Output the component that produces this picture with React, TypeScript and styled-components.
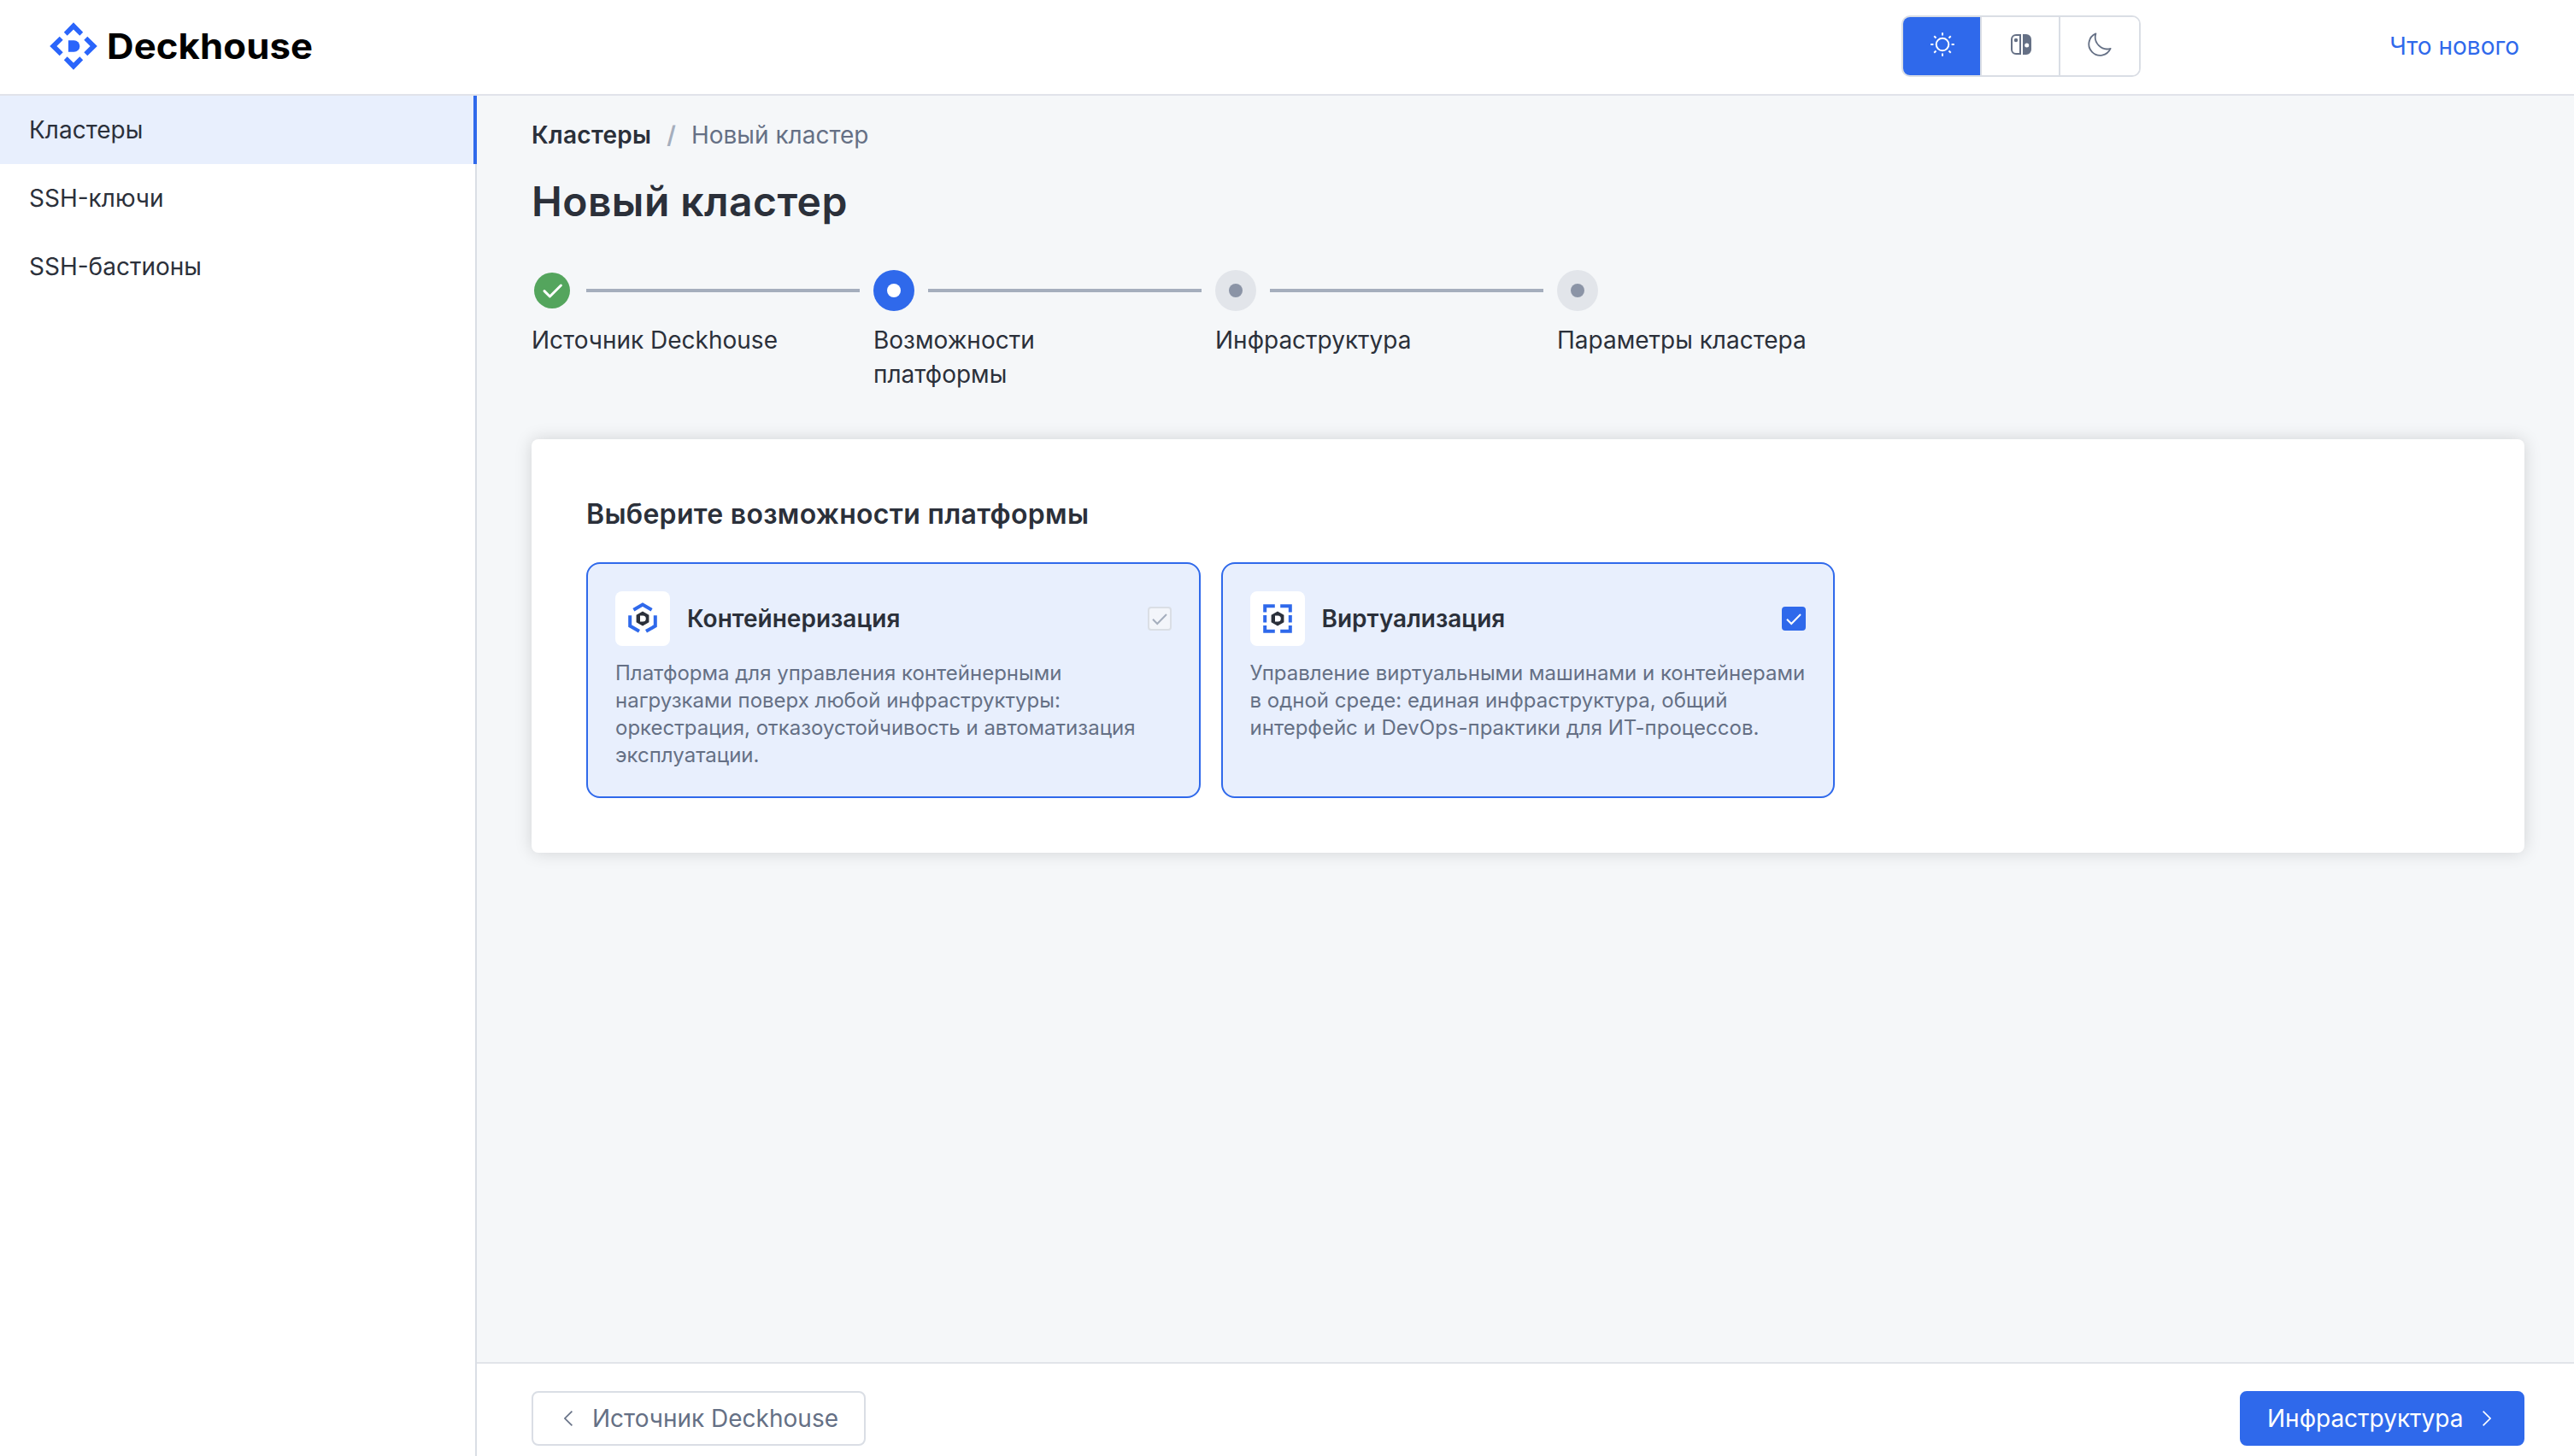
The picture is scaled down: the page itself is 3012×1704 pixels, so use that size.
import React from 'react';
import styled, { createGlobalStyle } from 'styled-components';

const c = {
  blue: '#2f69eb',
  logo: '#2a65fb',
  blueSoft: '#e8effd',
  text: '#2b303a',
  muted: '#657085',
  line: '#a5aebd',
  border: '#dadee5',
  bg: '#f5f7f9',
  green: '#54a55d',
};

const Global = createGlobalStyle`
  *, *::before, *::after { box-sizing: border-box; }
  html, body, #root { height: 100%; margin: 0; }
  body {
    font-family: Inter, "Liberation Sans", sans-serif;
    font-size: 28px;
    line-height: 40px;
    color: ${c.text};
    background: ${c.bg};
    overflow: hidden;
  }
  h1, h2, h3, p { margin: 0; }
  button { font: inherit; letter-spacing: inherit; cursor: pointer; }
  svg { display: block; flex: none; }
`;

const Page = styled.div`
  display: flex;
  flex-direction: column;
  height: 1704px;
`;

const Header = styled.header`
  display: flex;
  align-items: center;
  flex: none;
  height: 112px;
  padding: 0 64px 4px 58px;
  background: #fff;
  border-bottom: 2px solid #e1e3ea;
`;

const Brand = styled.div`
  display: flex;
  align-items: center;
  gap: 11px;
  margin-top: 2px;
`;

const BrandName = styled.span`
  font-size: 41px;
  font-weight: 700;
  line-height: 56px;
  letter-spacing: 0.1px;
  color: #000;
  transform: scaleX(1.065);
  transform-origin: left center;
`;

const Switcher = styled.div`
  display: flex;
  width: 280px;
  height: 72px;
  margin: 2px 291px 0 auto;
  border: 2px solid ${c.border};
  border-radius: 10px;
  overflow: hidden;
`;

const SwitchOption = styled.button<{ $active?: boolean }>`
  display: flex;
  align-items: center;
  justify-content: center;
  width: 92px;
  padding: 0 0 4px;
  border: 0;
  color: ${(p) => (p.$active ? '#fff' : c.muted)};
  background: ${(p) => (p.$active ? c.blue : '#fff')};
  &:not(:last-child) { box-shadow: inset -2px 0 0 ${c.border}; }
`;

const NewsLink = styled.a`
  color: ${c.blue};
  margin-top: 2px;
`;

const Body = styled.div`
  display: flex;
  flex: 1;
  min-height: 0;
`;

const Sidebar = styled.nav`
  width: 558px;
  flex: none;
  background: #fff;
  box-shadow: inset -2px 0 0 ${c.border};
`;

const NavItem = styled.a<{ $active?: boolean }>`
  display: flex;
  align-items: center;
  height: 80px;
  padding-left: 34px;
  background: ${(p) => (p.$active ? c.blueSoft : 'transparent')};
  border-right: 4px solid ${(p) => (p.$active ? c.blue : 'transparent')};
`;

const Main = styled.main`
  display: flex;
  flex-direction: column;
  flex: 1;
  min-width: 0;
`;

const Content = styled.div`
  flex: 1;
  padding: 26px 58px 0 64px;
`;

const Crumbs = styled.div`
  display: flex;
  gap: 18px;
  color: ${c.muted};
`;

const CrumbRoot = styled.a`
  font-weight: 600;
  letter-spacing: 0.3px;
  color: ${c.text};
`;

const CrumbSep = styled.span`
  font-weight: 600;
  color: ${c.line};
`;

const Title = styled.h1`
  margin-top: 26px;
  font-size: 48px;
  font-weight: 600;
  line-height: 64px;
  letter-spacing: 0.45px;
`;

const Steps = styled.div`
  display: flex;
  height: 198px;
  margin-top: 48px;
`;

const Step = styled.div`
  width: 400px;
`;

const StepTrack = styled.div`
  display: flex;
  align-items: center;
  gap: 16px;
  height: 48px;
`;

const StepLine = styled.div`
  width: 320px;
  height: 4px;
  background: ${c.line};
`;

const StepDot = styled.div<{ $active?: boolean }>`
  display: grid;
  place-items: center;
  width: 48px;
  height: 48px;
  border-radius: 50%;
  background: ${(p) => (p.$active ? c.blue : '#e2e5ea')};
  &::after {
    content: '';
    width: 16px;
    height: 16px;
    border-radius: 50%;
    background: ${(p) => (p.$active ? '#fff' : '#8b94a6')};
  }
`;

const StepLabel = styled.div`
  width: 300px;
  margin-top: 14px;
`;

const Panel = styled.section`
  height: 484px;
  padding: 64px;
  background: #fff;
  border-radius: 8px;
  box-shadow: 0 0 20px rgba(0, 0, 0, 0.15);
`;

const PanelTitle = styled.h2`
  font-size: 32px;
  font-weight: 600;
  line-height: 48px;
  letter-spacing: 0.3px;
`;

const Features = styled.div`
  display: flex;
  gap: 24px;
  margin-top: 32px;
`;

const Feature = styled.article`
  width: 718.5px;
  height: 276px;
  padding: 32px;
  border: 2px solid ${c.blue};
  border-radius: 16px;
  background: ${c.blueSoft};
`;

const FeatureHead = styled.div`
  display: flex;
  align-items: center;
`;

const FeatureIcon = styled.div`
  display: grid;
  place-items: center;
  width: 64px;
  height: 64px;
  border-radius: 8px;
  background: #fff;
`;

const FeatureTitle = styled.h3`
  flex: 1;
  margin-left: 20px;
  font-size: 28px;
  font-weight: 600;
`;

const Checkbox = styled.span<{ $disabled?: boolean }>`
  display: grid;
  place-items: center;
  width: 28px;
  height: 28px;
  border-radius: 4px;
  color: ${(p) => (p.$disabled ? c.line : '#fff')};
  background: ${(p) => (p.$disabled ? '#f3f5fa' : c.blue)};
  border: 2px solid ${(p) => (p.$disabled ? c.border : c.blue)};
`;

const FeatureText = styled.p`
  margin-top: 16px;
  font-size: 24px;
  line-height: 32px;
  color: ${c.muted};
  white-space: pre-line;
`;

const Footer = styled.footer`
  display: flex;
  justify-content: space-between;
  height: 110px;
  padding: 32px 58px 0 64px;
  background: #fff;
  border-top: 2px solid #e1e4e9;
`;

const Button = styled.button<{ $primary?: boolean }>`
  display: flex;
  align-items: center;
  justify-content: space-between;
  width: ${(p) => (p.$primary ? 333 : 391)}px;
  height: 64px;
  padding: ${(p) => (p.$primary ? '0 37px 0 30px' : '0 30px 0 36px')};
  border: 2px solid ${(p) => (p.$primary ? c.blue : c.border)};
  border-radius: 8px;
  color: ${(p) => (p.$primary ? '#fff' : c.muted)};
  background: ${(p) => (p.$primary ? c.blue : '#fff')};
`;

const LogoMark = () => (
  <svg width="56" height="56" viewBox="-28 -28 56 56" fill={c.logo}>
    {[0, 90, 180, 270].map((a) => (
      <path key={a} transform={`rotate(${a})`} d="M0-27.8 11.2-16.3 7.3-12.3 0-19.6-7.3-12.3-11.2-16.3Z" />
    ))}
    <path d="M-6-6.8H.6A6.8 6.8 0 0 1 .6 6.8H-6Z" />
  </svg>
);

const SunIcon = () => (
  <svg width="28" height="28" viewBox="-14 -14 28 28" fill="none" stroke="currentColor" strokeWidth="2">
    <circle r="7.3" />
    {[0, 45, 90, 135, 180, 225, 270, 315].map((a) => (
      <path key={a} transform={`rotate(${a})`} d="M0-13.8V-10.6" />
    ))}
  </svg>
);

const SystemIcon = () => (
  <svg width="24" height="24" viewBox="0 0 24 24">
    <path d="M11 1H6A5 5 0 0 0 1 6V18A5 5 0 0 0 6 23H11Z" fill="none" stroke="currentColor" strokeWidth="2" />
    <circle cx="6" cy="7" r="2.2" fill="currentColor" />
    <path
      fillRule="evenodd"
      fill="currentColor"
      d="M14 0H18A6 6 0 0 1 24 6V18A6 6 0 0 1 18 24H14ZM18.7 10.6A2.5 2.5 0 1 0 18.7 15.6A2.5 2.5 0 1 0 18.7 10.6Z"
    />
  </svg>
);

const MoonIcon = () => (
  <svg width="28" height="28" viewBox="0 0 28 28" fill="none" stroke="currentColor" strokeWidth="1.8" strokeLinejoin="round">
    <path d="M9.4 1.4A13.2 13.2 0 1 0 26.6 18.9A14 14 0 0 1 9.4 1.4Z" />
  </svg>
);

const DoneIcon = () => (
  <svg width="48" height="48" viewBox="0 0 48 48">
    <circle cx="24" cy="24" r="21" fill={c.green} />
    <path d="M15 24.6 21.4 31 34.4 18" fill="none" stroke="#fff" strokeWidth="3" strokeLinecap="round" strokeLinejoin="round" />
  </svg>
);

const CheckIcon = () => (
  <svg width="20" height="20" viewBox="0 0 20 20" fill="none" stroke="currentColor" strokeWidth="2">
    <path d="M2 10.8 7.2 16 18 5" />
  </svg>
);

const Hexagon = () => (
  <>
    <path d="M0-8.6 7.4-4.3V4.3L0 8.6-7.4 4.3V-4.3Z" fill={c.text} />
    <path d="M-3-3.6H.2A3.6 3.6 0 0 1 .2 3.6H-3Z" fill="#fff" />
  </>
);

const ContainerIcon = () => (
  <svg width="36" height="38" viewBox="-18 -19 36 38" fill="none" stroke={c.blue} strokeWidth="4">
    <path d="M-10.6-10.2 0-16.4 10.6-10.2" />
    <path d="M-14.8-3.8V8.6L-4 14.8" />
    <path d="M14.8-3.8V8.6L4 14.8" />
    <g stroke="none">
      <Hexagon />
    </g>
  </svg>
);

const VirtualIcon = () => (
  <svg width="36" height="36" viewBox="-18 -18 36 36" fill="none" stroke={c.blue} strokeWidth="4">
    <path d="M-14.8-7.6V-14.8H-3.2M3.2-14.8H14.8V-7.6M14.8 8V14.8H3.2M-3.2 14.8H-14.8V8M-14.8-4V4.6M14.8-4V4.6" />
    <g stroke="none">
      <Hexagon />
    </g>
  </svg>
);

const Chevron = ({ left }: { left?: boolean }) => (
  <svg width="10" height="18" viewBox="0 0 10 18" fill="none" stroke="currentColor" strokeWidth="1.6">
    <path d={left ? 'M9.4.6 1 9 9.4 17.4' : 'M.6.6 9 9 .6 17.4'} />
  </svg>
);

const steps = [
  { label: 'Источник Deckhouse', state: 'done' },
  { label: 'Возможности платформы', state: 'active' },
  { label: 'Инфраструктура', state: 'next' },
  { label: 'Параметры кластера', state: 'next' },
];

export default function App() {
  return (
    <>
      <Global />
      <Page>
        <Header>
          <Brand>
            <LogoMark />
            <BrandName>Deckhouse</BrandName>
          </Brand>
          <Switcher>
            <SwitchOption $active><SunIcon /></SwitchOption>
            <SwitchOption><SystemIcon /></SwitchOption>
            <SwitchOption><MoonIcon /></SwitchOption>
          </Switcher>
          <NewsLink>Что нового</NewsLink>
        </Header>
        <Body>
          <Sidebar>
            <NavItem $active>Кластеры</NavItem>
            <NavItem>SSH-ключи</NavItem>
            <NavItem>SSH-бастионы</NavItem>
          </Sidebar>
          <Main>
            <Content>
              <Crumbs>
                <CrumbRoot>Кластеры</CrumbRoot>
                <CrumbSep>/</CrumbSep>
                <span>Новый кластер</span>
              </Crumbs>
              <Title>Новый кластер</Title>
              <Steps>
                {steps.map((s, i) => (
                  <Step key={s.label}>
                    <StepTrack>
                      {s.state === 'done' ? <DoneIcon /> : <StepDot $active={s.state === 'active'} />}
                      {i < steps.length - 1 && <StepLine />}
                    </StepTrack>
                    <StepLabel>{s.label}</StepLabel>
                  </Step>
                ))}
              </Steps>
              <Panel>
                <PanelTitle>Выберите возможности платформы</PanelTitle>
                <Features>
                  <Feature>
                    <FeatureHead>
                      <FeatureIcon><ContainerIcon /></FeatureIcon>
                      <FeatureTitle>Контейнеризация</FeatureTitle>
                      <Checkbox $disabled><CheckIcon /></Checkbox>
                    </FeatureHead>
                    <FeatureText>
                      {'Платформа для управления контейнерными\nнагрузками поверх любой инфраструктуры:\nоркестрация, отказоустойчивость и автоматизация\nэксплуатации.'}
                    </FeatureText>
                  </Feature>
                  <Feature>
                    <FeatureHead>
                      <FeatureIcon><VirtualIcon /></FeatureIcon>
                      <FeatureTitle>Виртуализация</FeatureTitle>
                      <Checkbox><CheckIcon /></Checkbox>
                    </FeatureHead>
                    <FeatureText>
                      {'Управление виртуальными машинами и контейнерами\nв одной среде: единая инфраструктура, общий\nинтерфейс и DevOps-практики для ИТ-процессов.'}
                    </FeatureText>
                  </Feature>
                </Features>
              </Panel>
            </Content>
            <Footer>
              <Button><Chevron left />Источник Deckhouse</Button>
              <Button $primary>Инфраструктура<Chevron /></Button>
            </Footer>
          </Main>
        </Body>
      </Page>
    </>
  );
}
